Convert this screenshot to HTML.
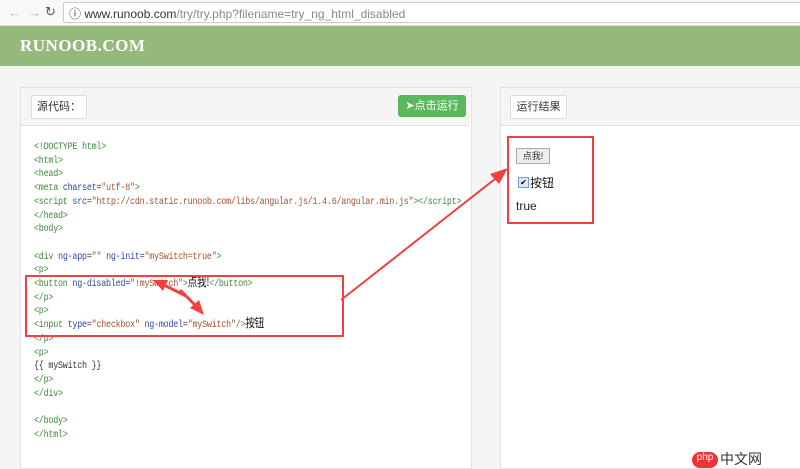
<html><head><style>
body{margin:0;width:800px;height:461px;background:#f5f5f5;font-family:"Liberation Sans","Noto Sans CJK SC",sans-serif;position:relative;overflow:hidden}
.abs{position:absolute}
.code{position:absolute;left:34px;top:141px;font-family:"Liberation Mono","Noto Sans CJK SC",monospace;font-size:10.5px;line-height:13.7px;color:#333;white-space:pre;letter-spacing:-0.3px;transform:scaleX(0.8);transform-origin:0 0}
.t{color:#3a8a3a}.a{color:#2a4aa0}.v{color:#a0522d}.c{font-family:"Noto Sans CJK SC",sans-serif;font-size:12px;display:inline-block;height:13.7px;line-height:13.7px;vertical-align:top;position:relative;top:-3px;color:#111}
</style></head><body>
<div class="abs" style="left:0;top:0;width:800px;height:25px;background:#f8f8f8;border-bottom:1px solid #ddd"></div>
<div class="abs" style="left:8px;top:5px;font-size:13px;color:#bbb">←&nbsp;&nbsp;→</div>
<div class="abs" style="left:45px;top:4px;font-size:13px;color:#555">↻</div>
<div class="abs" style="left:63px;top:2px;width:737px;height:19px;background:#fff;border:1px solid #ccc;border-radius:2px"></div>
<div class="abs" style="left:69px;top:5px;font-size:12px;color:#333">ⓘ <span style="color:#333">www.runoob.com</span><span style="color:#888">/try/try.php?filename=try_ng_html_disabled</span></div>
<div class="abs" style="left:0;top:26px;width:800px;height:40px;background:#95b97a"></div>
<div class="abs" style="left:20px;top:36px;font-family:'Liberation Serif',serif;font-weight:bold;font-size:17px;color:#fff;letter-spacing:0.5px">RUNOOB.COM</div>
<div class="abs" style="left:20px;top:87px;width:450px;height:380px;background:#fff;border:1px solid #e3e3e3"></div>
<div class="abs" style="left:21px;top:88px;width:449px;height:37px;background:#f5f5f5;border-bottom:1px solid #e3e3e3"></div>
<div class="abs" style="left:31px;top:95px;width:54px;height:22px;background:#fff;border:1px solid #ddd;border-radius:2px;font-size:11px;line-height:22px;text-align:center;color:#333">源代码：</div>
<div class="abs" style="left:398px;top:95px;width:68px;height:22px;background:#5cb85c;border-radius:3px;font-size:11px;line-height:22px;text-align:center;color:#fff">➤点击运行</div>
<div class="abs" style="left:500px;top:87px;width:300px;height:380px;background:#fff;border:1px solid #e3e3e3"></div>
<div class="abs" style="left:501px;top:88px;width:299px;height:37px;background:#f5f5f5;border-bottom:1px solid #e3e3e3"></div>
<div class="abs" style="left:510px;top:95px;width:55px;height:22px;background:#fff;border:1px solid #ddd;border-radius:2px;font-size:11px;line-height:22px;text-align:center;color:#333">运行结果</div>
<div class="code"><span class="t">&lt;!DOCTYPE html&gt;</span>
<span class="t">&lt;html&gt;</span>
<span class="t">&lt;head&gt;</span>
<span class="t">&lt;meta</span> <span class="a">charset</span>=<span class="v">"utf-8"</span><span class="t">&gt;</span>
<span class="t">&lt;script</span> <span class="a">src</span>=<span class="v">"http://cdn.static.runoob.com/libs/angular.js/1.4.6/angular.min.js"</span><span class="t">&gt;&lt;/script&gt;</span>
<span class="t">&lt;/head&gt;</span>
<span class="t">&lt;body&gt;</span>

<span class="t">&lt;div</span> <span class="a">ng-app</span>=<span class="v">""</span> <span class="a">ng-init</span>=<span class="v">"mySwitch=true"</span><span class="t">&gt;</span>
<span class="t">&lt;p&gt;</span>
<span class="t">&lt;button</span> <span class="a">ng-disabled</span>=<span class="v">"!mySwitch"</span><span class="t">&gt;</span><span class="c">点我!</span><span class="t">&lt;/button&gt;</span>
<span class="t">&lt;/p&gt;</span>
<span class="t">&lt;p&gt;</span>
<span class="t">&lt;input</span> <span class="a">type</span>=<span class="v">"checkbox"</span> <span class="a">ng-model</span>=<span class="v">"mySwitch"</span><span class="t">/&gt;</span><span class="c">按钮</span>
<span class="t">&lt;/p&gt;</span>
<span class="t">&lt;p&gt;</span>
{{ mySwitch }}
<span class="t">&lt;/p&gt;</span>
<span class="t">&lt;/div&gt;</span>

<span class="t">&lt;/body&gt;</span>
<span class="t">&lt;/html&gt;</span></div>
<div class="abs" style="left:516px;top:148px;width:32px;height:14px;background:#eee;border:1px solid #aaa;font-size:9px;line-height:14px;text-align:center;color:#333">点我!</div>
<div class="abs" style="left:518px;top:177px;width:9px;height:9px;border:1px solid #7a9ad0;background:#dde8f8;font-size:8px;line-height:9px;text-align:center">✔</div>
<div class="abs" style="left:530px;top:174px;font-size:12px;color:#111">按钮</div>
<div class="abs" style="left:516px;top:199px;font-size:12px;color:#222">true</div>
<div class="abs" style="left:25px;top:275px;width:315px;height:58px;border:2px solid #f04040"></div>
<div class="abs" style="left:507px;top:136px;width:83px;height:84px;border:2px solid #f04040"></div>
<svg class="abs" style="left:0;top:0" width="800" height="461">
<line x1="341" y1="300" x2="500" y2="175" stroke="#f04040" stroke-width="2"/>
<polygon points="508,168 490,174 499,184" fill="#f04040"/>
<line x1="186" y1="296" x2="162" y2="284" stroke="#f04040" stroke-width="3"/>
<polygon points="153,280 168,280 163,291" fill="#f04040"/>
<line x1="180" y1="290" x2="197" y2="307" stroke="#f04040" stroke-width="3"/>
<polygon points="204,315 190,308 199,300" fill="#f04040"/>
</svg>
<div class="abs" style="left:692px;top:452px;width:26px;height:16px;border-radius:8px;background:#e33;color:#fff;font-size:10px;text-align:center">php</div>
<div class="abs" style="left:720px;top:449px;font-size:14px;color:#333">中文网</div>
</body></html>
